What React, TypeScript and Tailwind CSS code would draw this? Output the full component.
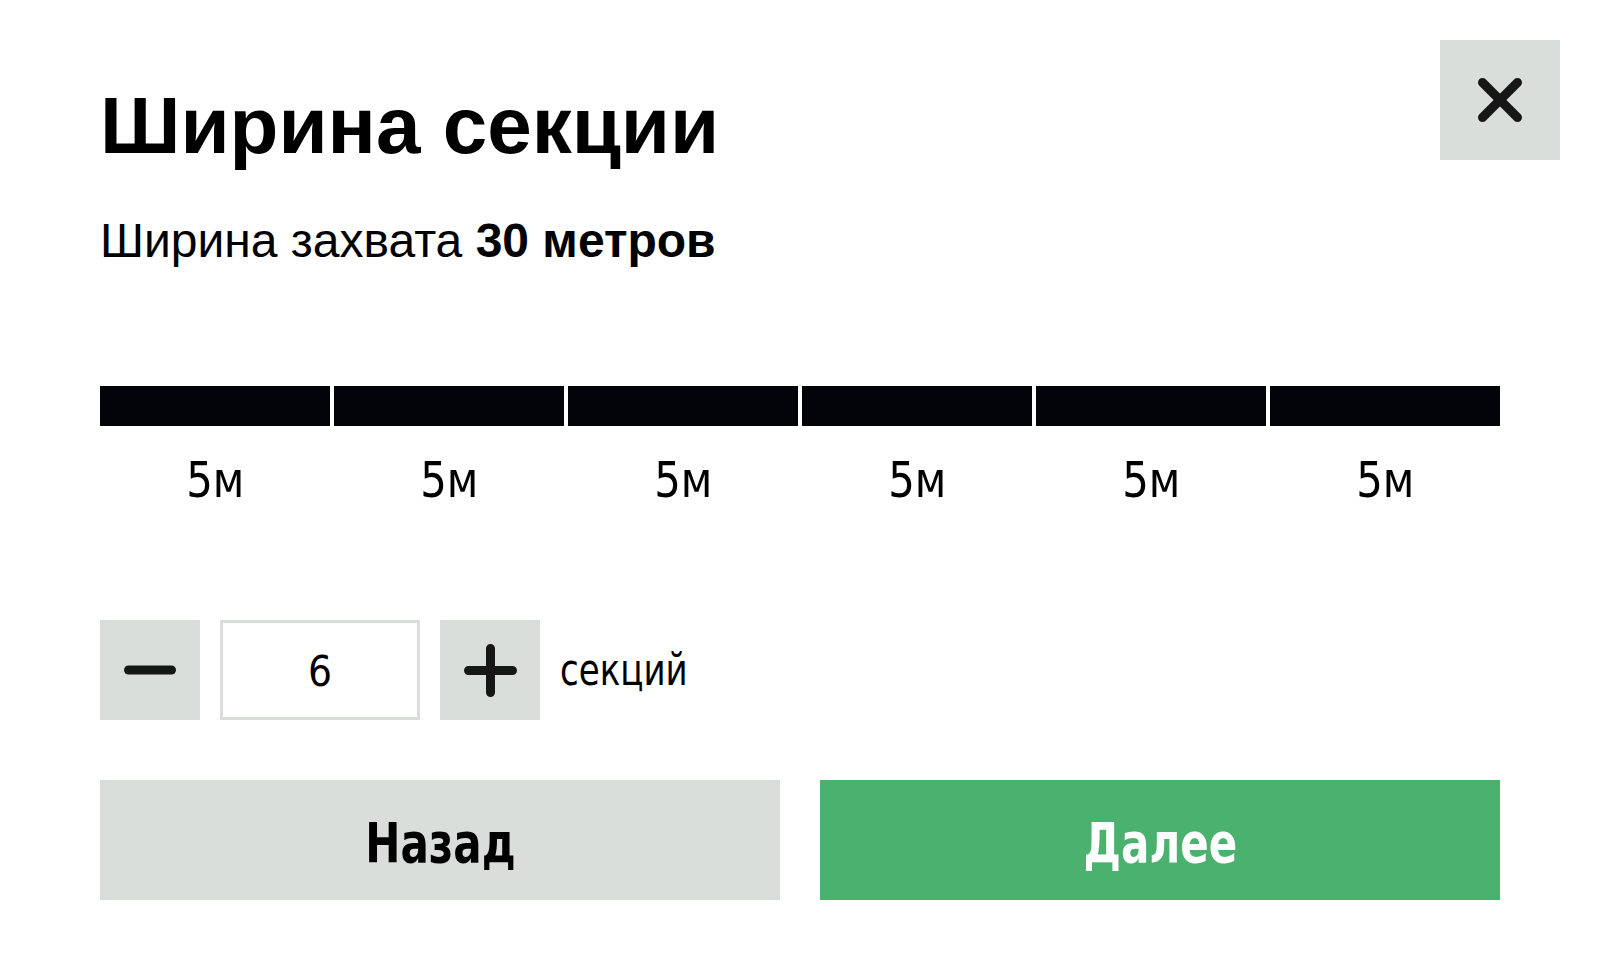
export default function App() {
  const segs = [0, 1, 2, 3, 4, 5];
  return (
    <div className="relative w-[1600px] h-[960px] bg-white overflow-hidden">
      <button className="absolute top-[40px] right-[40px] w-[120px] h-[120px] bg-[#d9dedb] flex items-center justify-center">
        <svg width="44" height="44" viewBox="0 0 44 44">
          <path d="M4.5 4.5L39.5 39.5M39.5 4.5L4.5 39.5" stroke="#161616" strokeWidth="9" strokeLinecap="round" />
        </svg>
      </button>
      <div className="px-[100px] pt-[86px] flex flex-col">
        <h1 className="font-['Liberation_Sans',Arial,sans-serif] font-bold text-[80px] leading-[80px] text-black">
          Ширина секции
        </h1>
        <p className="mt-[51px] font-['Liberation_Sans',Arial,sans-serif] text-[48px] leading-[48px] text-black">
          Ширина захвата <span className="font-bold">30 метров</span>
        </p>
        <div className="mt-[121px] flex gap-[4px] h-[40px]">
          {segs.map((i) => (
            <div key={i} className="flex-1 bg-[#030409]" />
          ))}
        </div>
        <div className="mt-[29px] flex gap-[4px]">
          {segs.map((i) => (
            <div
              key={i}
              className="flex-1 text-center font-['DejaVu_Sans_Condensed','DejaVu_Sans',sans-serif] text-[50px] leading-[50px] text-black"
            >
              <span className="inline-block scale-x-[0.93]">5м</span>
            </div>
          ))}
        </div>
        <div className="mt-[115px] flex items-center gap-[20px] h-[100px]">
          <button className="w-[100px] h-[100px] bg-[#d9dedb] flex items-center justify-center">
            <svg width="52" height="10" viewBox="0 0 52 10">
              <path d="M4.5 5H47.5" stroke="#161616" strokeWidth="9" strokeLinecap="round" />
            </svg>
          </button>
          <div className="w-[200px] h-[100px] border-[3px] border-[#d9dedb] bg-white flex items-center justify-center pt-[2px] font-['DejaVu_Sans_Condensed','DejaVu_Sans',sans-serif] text-[42px] text-black">
            6
          </div>
          <button className="w-[100px] h-[100px] bg-[#d9dedb] flex items-center justify-center">
            <svg width="53" height="53" viewBox="0 0 53 53">
              <path d="M4.5 26.5H48.5M26.5 4.5V48.5" stroke="#161616" strokeWidth="9" strokeLinecap="round" />
            </svg>
          </button>
          <span className="inline-block origin-left scale-x-[0.86] font-['DejaVu_Sans_Condensed','DejaVu_Sans',sans-serif] text-[44px] text-black">
            секций
          </span>
        </div>
        <div className="mt-[60px] flex gap-[40px]">
          <button className="flex-1 h-[120px] bg-[#d9dedb] flex items-center justify-center pt-[6px]">
            <span className="inline-block scale-x-[0.85] font-['DejaVu_Sans_Condensed','DejaVu_Sans',sans-serif] font-bold text-[55px] leading-none text-black">
              Назад
            </span>
          </button>
          <button className="flex-1 h-[120px] bg-[#4bb16f] flex items-center justify-center pt-[6px]">
            <span className="inline-block scale-x-[0.85] font-['DejaVu_Sans_Condensed','DejaVu_Sans',sans-serif] font-bold text-[55px] leading-none text-white">
              Далее
            </span>
          </button>
        </div>
      </div>
    </div>
  );
}
